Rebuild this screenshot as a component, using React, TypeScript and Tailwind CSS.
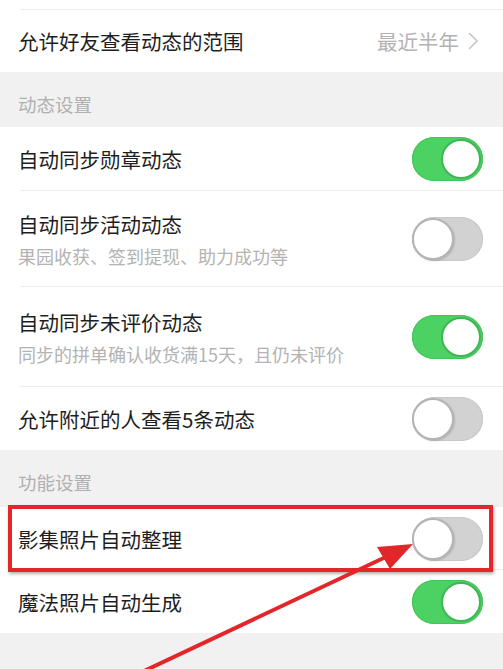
import React from 'react'

type Item = {
    title: string
    sub?: string
    on: boolean
    h: string
    marked?: boolean
}

const font = { fontFamily: '"Noto Sans CJK SC", "Noto Sans", sans-serif' }

const Toggle = ({ on }: { on: boolean }) => (
    <div
        className={
            on
                ? 'relative w-[71px] h-[44px] rounded-full bg-[#4cd263] shadow-[inset_0_0_0_1px_#45c35a]'
                : 'relative w-[71px] h-[44px] rounded-full bg-[#d2d2d2] shadow-[inset_0_0_0_1px_#c8c8c8]'
        }
    >
        <div
            className={
                on
                    ? 'absolute top-[2px] right-[2px] w-[40px] h-[40px] rounded-full bg-white border-2 border-[#3fb656]'
                    : 'absolute top-[1px] left-0 w-[42px] h-[42px] rounded-full bg-white border-2 border-[#b4b4b4] shadow-[1px_1px_2px_rgba(0,0,0,0.15)]'
            }
        />
    </div>
)

const Row = ({ item, last }: { item: Item; last: boolean }) => (
    <div className={`relative bg-white ${item.h} ${item.marked ? 'z-10' : ''}`}>
        <div className="flex items-center justify-between h-full pl-[18px] pr-[20px]">
            <div className="flex flex-col">
                <div className="text-[20.5px] leading-[28px] text-[#1e1e1e]">{item.title}</div>
                {item.sub && <div className="text-[18px] leading-[24px] mt-[6px] text-[#b3b3b3]">{item.sub}</div>}
            </div>
            <Toggle on={item.on} />
        </div>
        {!last && <div className="absolute bottom-0 left-[20px] right-0 h-px bg-[#ececec]" />}
        {item.marked && (
            <div className="absolute -top-[2px] -bottom-[2px] left-[8px] right-[10px] border-4 border-[#e3262a] shadow-[1px_2px_3px_rgba(0,0,0,0.3)]" />
        )}
    </div>
)

const feedItems: Item[] = [
    { title: '自动同步勋章动态', on: true, h: 'h-[64px]' },
    { title: '自动同步活动动态', sub: '果园收获、签到提现、助力成功等', on: false, h: 'h-[96px]' },
    { title: '自动同步未评价动态', sub: '同步的拼单确认收货满15天，且仍未评价', on: true, h: 'h-[100px]' },
    { title: '允许附近的人查看5条动态', on: false, h: 'h-[63px]' },
]

const featureItems: Item[] = [
    { title: '影集照片自动整理', on: false, h: 'h-[63px]', marked: true },
    { title: '魔法照片自动生成', on: true, h: 'h-[63px]' },
]

const App = () => {
    return (
        <div className="relative w-[503px] h-[669px] overflow-hidden bg-[#f1f1f1]" style={font}>
            {/* tail of the previous row */}
            <div className="relative bg-white h-[10px]">
                <div className="absolute bottom-0 left-[20px] right-0 h-px bg-[#ececec]" />
            </div>
            <div className="bg-white h-[62px] flex items-center justify-between pl-[18px] pr-[24px]">
                <div className="text-[20.5px] text-[#1e1e1e]">允许好友查看动态的范围</div>
                <div className="flex items-center gap-[8px] text-[20.5px] text-[#b3b3b3]">
                    <span>最近半年</span>
                    <svg width="12" height="20" viewBox="0 0 12 20" fill="none">
                        <path d="M2 2l8 8-8 8" stroke="#c6c6c6" strokeWidth="1.6" />
                    </svg>
                </div>
            </div>

            <div className="h-[55px] flex items-end pb-[8px] pl-[18px] text-[18.5px] text-[#b0b0b0]">动态设置</div>
            {feedItems.map((item, i) => (
                <Row key={i} item={item} last={i === feedItems.length - 1} />
            ))}

            <div className="h-[57px] flex items-end pb-[10px] pl-[18px] text-[18.5px] text-[#b0b0b0]">功能设置</div>
            {featureItems.map((item, i) => (
                <Row key={i} item={item} last={i === featureItems.length - 1} />
            ))}

            {/* pointer arrow */}
            <svg className="absolute left-0 top-0 z-20" width="503" height="669" viewBox="0 0 503 669">
                <line x1="142" y1="672" x2="390" y2="555" stroke="#e3262a" strokeWidth="4" />
                <polygon points="413,544 377,547 390,569" fill="#e3262a" />
            </svg>
        </div>
    )
}

export default App
